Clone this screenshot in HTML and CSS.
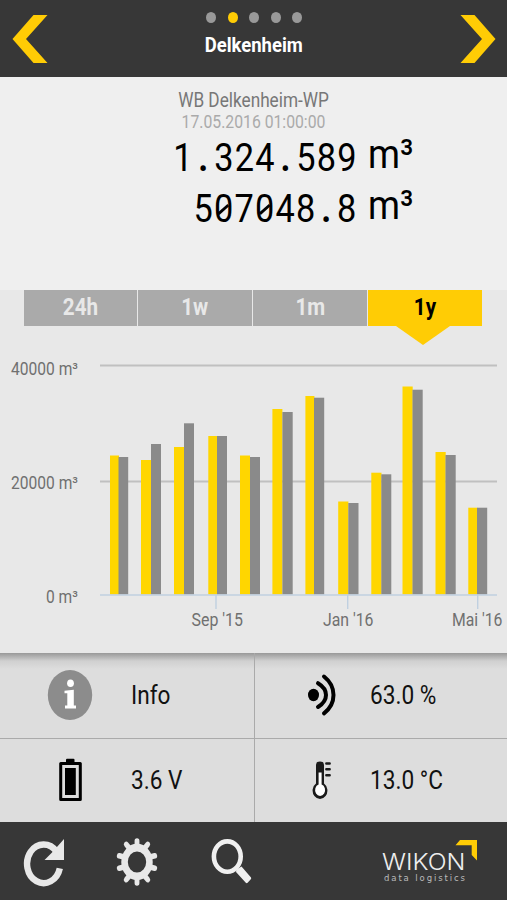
FILE: index.html
```html
<!DOCTYPE html>
<html lang="en">
  <head>
    <meta charset="UTF-8" />
    <meta name="viewport" content="width=device-width, initial-scale=1.0" />
    <title>Delkenheim</title>
    <link rel="stylesheet" href="styles.css">
  </head>
  <body>
    <header class="header">
      <svg class="arrow" width="36" height="48" viewBox="0 0 36 48">
        <path d="M21.5 0H35.5L14 24L35.5 48H21.5L0.5 24Z" />
      </svg>
      <div class="header-center">
        <div class="dots">
          <span class="dot"></span>
          <span class="dot active"></span>
          <span class="dot"></span>
          <span class="dot"></span>
          <span class="dot"></span>
        </div>
        <h1>Delkenheim</h1>
      </div>
      <svg class="arrow" width="36" height="48" viewBox="0 0 36 48">
        <path d="M14.5 0H0.5L22 24L0.5 48H14.5L35.5 24Z" />
      </svg>
    </header>

    <section class="meter">
      <div class="meter-name">WB Delkenheim-WP</div>
      <div class="meter-date">17.05.2016 01:00:00</div>
      <div class="reading">
        <span class="value">1<i>.</i>324<i>.</i>589</span>
        <span class="unit">m³</span>
      </div>
      <div class="reading">
        <span class="value">5<b>0</b>7<b>0</b>48<i>.</i>8</span>
        <span class="unit">m³</span>
      </div>
    </section>

    <section class="history">
      <nav class="tabs">
        <a class="tab"><span>24h</span></a>
        <a class="tab"><span>1w</span></a>
        <a class="tab"><span>1m</span></a>
        <a class="tab active"><span>1y</span></a>
      </nav>
      <svg class="chart" width="507" height="308" viewBox="0 0 507 308">
        <path class="grid-line" d="M100 20.5H497M100 136.5H497" />
        <g class="current">
          <rect x="110" y="110.5" width="9" height="139" />
          <rect x="141" y="115" width="10" height="134.5" />
          <rect x="174" y="102" width="10" height="147.5" />
          <rect x="208.3" y="91" width="9" height="158.5" />
          <rect x="240" y="110.5" width="10" height="139" />
          <rect x="272.4" y="64" width="10" height="185.5" />
          <rect x="305.4" y="51" width="9" height="198.5" />
          <rect x="338.2" y="156.5" width="10.2" height="93" />
          <rect x="371.3" y="127.7" width="10.2" height="121.8" />
          <rect x="402.5" y="41.5" width="10.2" height="208" />
          <rect x="435.5" y="107" width="10.2" height="142.5" />
          <rect x="468.3" y="162.7" width="9" height="86.8" />
        </g>
        <g class="previous">
          <rect x="118.5" y="112" width="9.7" height="137.5" />
          <rect x="151" y="99" width="10" height="150.5" />
          <rect x="184" y="78.3" width="10" height="171.2" />
          <rect x="217" y="91" width="10" height="158.5" />
          <rect x="250" y="112" width="10" height="137.5" />
          <rect x="282.4" y="67" width="10.3" height="182.5" />
          <rect x="314" y="52.7" width="10.2" height="196.8" />
          <rect x="348.3" y="158" width="10.2" height="91.5" />
          <rect x="381.3" y="129.3" width="10" height="120.2" />
          <rect x="412.5" y="44.7" width="10.2" height="204.8" />
          <rect x="445.5" y="110" width="10.2" height="139.5" />
          <rect x="477" y="162.7" width="10.2" height="86.8" />
        </g>
        <path class="axis" d="M100 250H497M216 250V264M347.7 250V264M477.7 250V264" />
        <g class="axis-label">
          <text x="11" y="30" textLength="67" lengthAdjust="spacingAndGlyphs">40000 m³</text>
          <text x="11" y="144" textLength="67" lengthAdjust="spacingAndGlyphs">20000 m³</text>
          <text x="46" y="258" textLength="32" lengthAdjust="spacingAndGlyphs">0 m³</text>
          <text x="191.5" y="281" textLength="51.5" lengthAdjust="spacingAndGlyphs">Sep '15</text>
          <text x="323" y="281" textLength="50.5" lengthAdjust="spacingAndGlyphs">Jan '16</text>
          <text transform="translate(452 281) scale(0.9 1)">Mai '16</text>
        </g>
      </svg>
    </section>

    <section class="status">
      <div class="cell">
        <svg class="icon" width="46" height="52" viewBox="0 0 46 52">
          <ellipse cx="23" cy="26" rx="22.2" ry="25" fill="#8c8c8c" />
          <ellipse cx="23.5" cy="14.3" rx="3.4" ry="3.8" fill="#fff" />
          <path d="M17.5 21.8L26.8 20.8V36.5H29V39.5H18V36.5H20.3V24.3H17.5Z" fill="#fff" />
        </svg>
        <span class="label">Info</span>
      </div>
      <div class="cell">
        <svg class="icon" width="46" height="52" viewBox="0 0 46 52">
          <ellipse cx="15.5" cy="26" rx="5.5" ry="6.2" />
          <path d="M20 14.2Q28 19 28 26T20 38" fill="none" stroke="#000" stroke-width="4" stroke-linecap="round" />
          <path d="M26 7.5Q35.5 15 35.5 26T26 44.3" fill="none" stroke="#000" stroke-width="4" stroke-linecap="round" />
        </svg>
        <span class="label">63.0 %</span>
      </div>
      <div class="cell">
        <svg class="icon" width="46" height="52" viewBox="0 0 46 52">
          <rect x="19" y="4.8" width="8.5" height="5" rx="1" />
          <rect x="13.7" y="9.4" width="19.6" height="36.2" fill="#ddd" stroke="#000" stroke-width="3" stroke-linejoin="round" />
          <rect x="18" y="14" width="10.8" height="27" />
        </svg>
        <span class="label">3.6 V</span>
      </div>
      <div class="cell">
        <svg class="icon" width="46" height="52" viewBox="0 0 46 52">
          <path d="M18 29.5V11Q18 7.6 22 7.6T26 11V29.5A7.4 8.4 0 1 1 18 29.5Z" fill="#1a1a1a" />
          <path d="M20.6 18.5H23.6V30.6A5 5.8 0 1 1 20.6 30.6Z" fill="#fff" />
          <path d="M28.4 9.5H31.6M28.4 15.3H31.6M28.4 21.2H31.6" stroke="#1a1a1a" stroke-width="2.6" stroke-linecap="round" />
        </svg>
        <span class="label">13.0 °C</span>
      </div>
    </section>

    <footer class="footer">
      <svg width="42" height="50" viewBox="0 0 42 50">
        <path d="M34.5 13.5A16.6 19.3 0 1 0 37.8 30.3" fill="none" stroke="#e8e8e8" stroke-width="6.4" />
        <path d="M42 1V22H22.5L29.5 15L34.5 9.5Z" fill="#e8e8e8" />
      </svg>
      <svg class="gear" width="42" height="50" viewBox="-21 -24 42 50">
        <g transform="scale(0.865 1)" fill="none" stroke="#e8e8e8">
          <circle r="14.4" stroke-width="7.6" />
          <path stroke-width="5.6" stroke-linecap="round" d="M0 -16V-21M0 16V21M9 -14L12.4 -17.6M-9 -14L-12.4 -17.6M9 14L12.4 17.6M-9 14L-12.4 17.6M16 -5.2L20.5 -6.2M-16 -5.2L-20.5 -6.2M16 5.2L20.5 6.2M-16 5.2L-20.5 6.2" />
        </g>
      </svg>
      <svg class="search" width="42" height="50" viewBox="0 0 42 50">
        <ellipse cx="17.3" cy="18.6" rx="13.4" ry="15.2" fill="none" stroke="#f0f0f0" stroke-width="4.6" />
        <path d="M26.5 31.5L31.5 28.5L41 39.5Q41.5 40.5 40.8 41.3L37.6 44.8Q36.6 45.7 35.8 44.8L26 34Z" fill="#f0f0f0" />
      </svg>
      <svg class="logo" width="98" height="50" viewBox="0 0 98 50">
        <path d="M80 2H97V22.5L91.7 17V7.3H75.5Z" fill="#ffcc05" />
        <text class="logo-name" x="2" y="31.5" textLength="83.5" lengthAdjust="spacingAndGlyphs">WIKON</text>
        <text class="logo-sub" x="4" y="43" textLength="81">data logistics</text>
      </svg>
    </footer>
  </body>
</html>
```

FILE: styles.css
```css
* {
  margin: 0;
  padding: 0;
  box-sizing: border-box;
}
body {
  width: 507px;
  height: 900px;
  overflow: hidden;
  font-family: Roboto, sans-serif;
  background-color: #e8e8e8;
  color: #000;
}
svg {
  display: block;
  flex-shrink: 0;
}
.header {
  height: 77px;
  padding: 0 11.5px 0 12px;
  display: flex;
  justify-content: space-between;
  align-items: center;
  background-color: #373737;
}
.arrow {
  fill: #ffcc05;
}
.header-center {
  height: 77px;
  padding: 12px 0 0 1px;
  display: flex;
  flex-direction: column;
  align-items: center;
}
.dots {
  display: flex;
  gap: 11.4px;
}
.dot {
  width: 10px;
  height: 11px;
  border-radius: 50%;
  background-color: #999;
}
.dot.active {
  background-color: #ffcc05;
}
h1 {
  margin-top: 10px;
  font-size: 21px;
  line-height: 25px;
  font-weight: 700;
  color: #fff;
  transform: scaleX(0.88);
}
.meter {
  height: 213px;
  padding-top: 11px;
  background-color: #efefef;
  text-align: center;
}
.meter-name {
  font-size: 20px;
  line-height: 24px;
  color: #777;
  transform: scaleX(0.86);
}
.meter-date {
  font-size: 18px;
  line-height: 19px;
  color: #aaa;
  transform: scaleX(0.875);
}
.reading {
  height: 51px;
  padding-right: 93px;
  display: flex;
  justify-content: flex-end;
  align-items: center;
}
.value {
  margin-top: 4px;
  font-size: 39px;
  line-height: 51px;
  letter-spacing: 1.4px;
  transform: scaleX(0.88);
  transform-origin: right;
}
.value i {
  display: inline-block;
  width: 23.3px;
  font-style: normal;
  font-weight: 700;
  text-align: center;
}
/* slashed zero */
.value b {
  position: relative;
  font-weight: 400;
}
.value b::after {
  content: "";
  position: absolute;
  left: 4px;
  top: 22px;
  width: 14px;
  height: 2.5px;
  background-color: #000;
  transform: rotate(-38deg);
}
.unit {
  margin-left: 10px;
  font-size: 41px;
  line-height: 44px;
  margin-top: -6px;
  width: 46px;
  transform: scaleX(0.89);
  transform-origin: left;
}
.history {
  height: 363px;
  background-color: #e8e8e8;
}
.tabs {
  height: 55px;
  padding: 0 25.5px 0 23.5px;
  display: grid;
  grid-template-columns: repeat(4, 1fr);
  gap: 1.5px;
}
.tab {
  position: relative;
  height: 36px;
  background-color: #aaa;
  color: #e8e8e8;
  font-size: 24px;
  line-height: 35px;
  font-weight: 700;
  text-align: center;
}
.tab span {
  display: inline-block;
  transform: scaleX(0.86);
}
.tab.active {
  background-color: #ffcc05;
  color: #000;
}
.tab.active::after {
  content: "";
  position: absolute;
  top: 36px;
  left: 28px;
  border: 27px solid transparent;
  border-top: 19px solid #ffcc05;
  border-bottom: 0;
}
.grid-line {
  stroke: #c0c0c0;
  stroke-width: 1.8;
}
.axis {
  fill: none;
  stroke: #c0d0e0;
  stroke-width: 1.4;
}
.current {
  fill: #ffd600;
}
.previous {
  fill: #8a8a8a;
}
.axis-label {
  font-size: 17.5px;
  fill: #707070;
}
.status {
  height: 169px;
  display: grid;
  grid-template-columns: 255px 252px;
  grid-template-rows: 86px 83px;
  background-color: #ddd;
  background-image: linear-gradient(#999, #d0d0d0 8px, #ddd 16px);
}
.cell {
  padding: 0 0 2px 47px;
  display: flex;
  align-items: center;
}
.cell:nth-child(odd) {
  border-right: 1px solid #aaa;
}
.cell:nth-child(even) {
  padding-left: 43px;
}
.cell:nth-child(-n + 2) {
  border-bottom: 1px solid #aaa;
}
.label {
  margin: 2px 0 0 37.5px;
  font-size: 25px;
  line-height: 30px;
  color: #111;
  white-space: nowrap;
  transform: scaleX(0.905);
  transform-origin: left;
}
.cell:nth-child(even) .label {
  margin-left: 26px;
}
.footer {
  height: 78px;
  padding: 16px 0 0 22px;
  display: flex;
  background-color: #373737;
}
.gear {
  margin-left: 52px;
}
.search {
  margin-left: 52px;
}
.logo {
  margin-left: 128px;
}
.logo-name {
  font-family: Inter, sans-serif;
  font-size: 22.5px;
  font-weight: 300;
  fill: #eee;
}
.logo-sub {
  font-family: "DejaVu Sans", sans-serif;
  font-size: 8.5px;
  fill: #bbb;
}
```
